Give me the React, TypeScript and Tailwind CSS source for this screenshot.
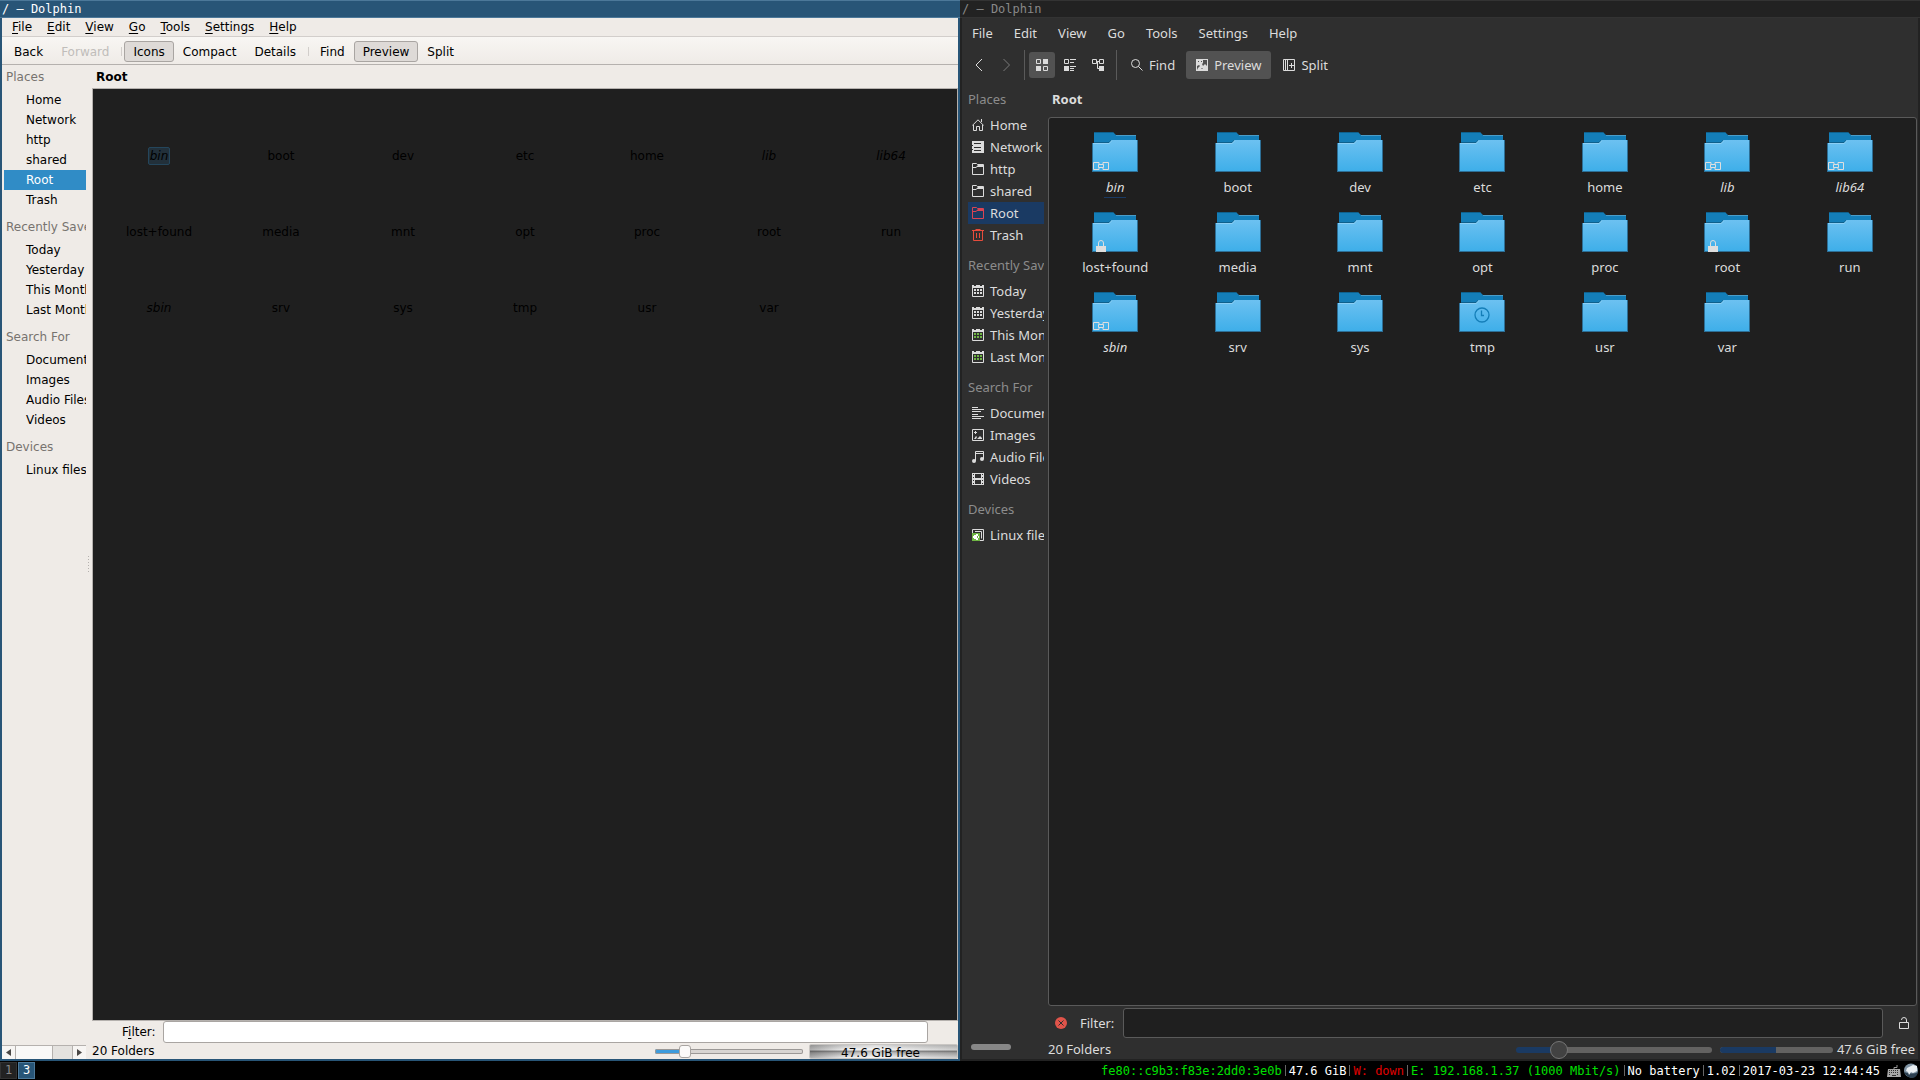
import type { ReactNode } from "react"
import clsx from "clsx"

const MENU = ["File", "Edit", "View", "Go", "Tools", "Settings", "Help"]

type Place = { name: string; icon: ReactNode }
type Folder = { name: string; link?: boolean; locked?: boolean; temp?: boolean }

const FOLDERS: Folder[] = [
    { name: "bin", link: true },
    { name: "boot" },
    { name: "dev" },
    { name: "etc" },
    { name: "home" },
    { name: "lib", link: true },
    { name: "lib64", link: true },
    { name: "lost+found", locked: true },
    { name: "media" },
    { name: "mnt" },
    { name: "opt" },
    { name: "proc" },
    { name: "root", locked: true },
    { name: "run" },
    { name: "sbin", link: true },
    { name: "srv" },
    { name: "sys" },
    { name: "tmp", temp: true },
    { name: "usr" },
    { name: "var" },
]

function Glyph({ children, className }: { children: ReactNode; className?: string }) {
    return (
        <svg viewBox="0 0 12 12" className={clsx("size-3 shrink-0", className)} fill="none" stroke="currentColor" aria-hidden="true">
            {children}
        </svg>
    )
}

const homeIcon = (
    <Glyph>
        <path d="M0.3 6.5 L6 0.8 L11.7 6.5 M9.5 0v3 M1.5 6v5.5h3v-4h3v4h3V6" />
    </Glyph>
)

const networkIcon = (
    <Glyph>
        <path stroke="none" fill="currentColor" d="M0 0h12v12H0z" />
        <path stroke="#2f2f2f" d="M2 2.5h7M0 4.500h1M2 6.5h7M0 8.500h1M2 9.5h7" />
    </Glyph>
)

const folderIcon = (
    <Glyph>
        <path d="M0.5 0.5h4l1 1h6v10H0.5z" />
        <path stroke="none" fill="currentColor" d="M1 4h3l2-2h5v2H5L4 5H1z" />
    </Glyph>
)

const rootIcon = <Glyph className="text-[#da4453]">{folderIcon.props.children}</Glyph>

const trashIcon = (
    <Glyph className="text-[#e74c3c]">
        <path d="M0 1.5h12M3.5 0.5h5M1.5 1.5v10h9v-10M4.5 4v5M7.5 4v5" />
    </Glyph>
)

function CalendarIcon({ green }: { green?: boolean }) {
    return (
        <Glyph>
            <path d="M0.5 1.5h11v10H0.5z" />
            <path stroke="none" fill="currentColor" d="M0 0h2v1h2V0h4v1h2V0h2v3H0z" />
            <path
                stroke="none"
                fill={green ? "#6fb544" : "currentColor"}
                d="M2 4h2v2H2zM5 4h2v2H5zM8 4h2v2H8zM2 7h2v2H2zM5 7h2v2H5zM8 7h2v2H8z"
            />
        </Glyph>
    )
}

const documentIcon = (
    <Glyph>
        <path d="M0 0.5h6M0 2.5h12M0 4.5h9M0 7.5h6M0 9.5h12M0 11.5h9" />
    </Glyph>
)

const imageIcon = (
    <Glyph>
        <path d="M0.5 0.5h11v11H0.5z" />
        <path stroke="none" fill="currentColor" d="M3 2h1v1h1v1H4v1H3V4H2V3h1zM2 10l2-3 1 1-1 2zM5 10l3-3 2 2v1z" />
    </Glyph>
)

const audioIcon = (
    <Glyph>
        <path d="M3.5 10V0.5h8V8M3.5 2.5h8" />
        <circle cx="2" cy="10" r="2" fill="currentColor" stroke="none" />
        <circle cx="10" cy="8" r="2" fill="currentColor" stroke="none" />
    </Glyph>
)

const videoIcon = (
    <Glyph>
        <path stroke="none" fill="currentColor" fillRule="evenodd" d="M0 0h12v12H0zM3 1h6v4H3zM3 7h6v4H3z" />
        <path stroke="#2f2f2f" strokeDasharray="1 2" d="M1.5 1v10M10.5 1v10" />
    </Glyph>
)

const diskIcon = (
    <Glyph>
        <path d="M0.5 0.5h11v11H0.5zM3 2.5h6.5v7M5 4.5h2.5V9" />
        <path stroke="none" fill="#6fb544" d="M0 4h8v8H0z" />
        <path stroke="none" fill="#fff" d="M1 7h1V6h2V5h2v2h1v2H6v2H4v-1H2V9H1z" />
        <path stroke="none" fill="#6fb544" d="M5 7h1v2H5z" />
    </Glyph>
)

const PLACES: { title: string; items: Place[] }[] = [
    {
        title: "Places",
        items: [
            { name: "Home", icon: homeIcon },
            { name: "Network", icon: networkIcon },
            { name: "http", icon: folderIcon },
            { name: "shared", icon: folderIcon },
            { name: "Root", icon: rootIcon },
            { name: "Trash", icon: trashIcon },
        ],
    },
    {
        title: "Recently Saved",
        items: [
            { name: "Today", icon: <CalendarIcon /> },
            { name: "Yesterday", icon: <CalendarIcon /> },
            { name: "This Month", icon: <CalendarIcon green /> },
            { name: "Last Month", icon: <CalendarIcon green /> },
        ],
    },
    {
        title: "Search For",
        items: [
            { name: "Documents", icon: documentIcon },
            { name: "Images", icon: imageIcon },
            { name: "Audio Files", icon: audioIcon },
            { name: "Videos", icon: videoIcon },
        ],
    },
    {
        title: "Devices",
        items: [{ name: "Linux filesystem", icon: diskIcon }],
    },
]

/* ---------- light window ---------- */

function LightButton({ children, active, disabled }: { children: ReactNode; active?: boolean; disabled?: boolean }) {
    return (
        <button
            disabled={disabled}
            className={clsx(
                "h-[21px] rounded-[3px] border px-2 leading-5",
                active ? "border-[#a9a5a2] bg-[#dedad7]" : "border-transparent",
                disabled && "text-[#c0bdba]"
            )}
        >
            {children}
        </button>
    )
}

function LightPlaces() {
    return (
        <aside className="flex w-[90px] shrink-0 flex-col">
            <nav className="ml-[2px] w-[82px] flex-1 overflow-hidden whitespace-nowrap">
                {PLACES.map((group, i) => (
                    <section key={group.title}>
                        <h2 className={clsx("pl-[2px] text-[#77736f]", i === 0 ? "h-[25px] leading-6" : "h-[30px] leading-[34px]")}>
                            {group.title}
                        </h2>
                        {group.items.map((place) => (
                            <button
                                key={place.name}
                                className={clsx(
                                    "block h-5 w-full overflow-hidden pl-[22px] text-left leading-5",
                                    place.name === "Root" && "bg-[#308cc6] text-white"
                                )}
                            >
                                {place.name}
                            </button>
                        ))}
                    </section>
                ))}
            </nav>
            <div className="flex h-[14px] w-[84px] border-t border-[#b5b1ae] bg-[#e4e2df]">
                <button aria-label="Scroll left" className="flex w-[14px] items-center justify-center border-r border-[#b5b1ae] bg-[#f7f5f3]">
                    <svg viewBox="0 0 5 7" className="h-[7px] w-[5px]" fill="#4a4745"><path d="M5 0v7L0 3.5z" /></svg>
                </button>
                <div className="w-[37px] border-r border-[#b5b1ae] bg-[#f9f8f7]" />
                <div className="flex-1" />
                <button aria-label="Scroll right" className="flex w-[14px] items-center justify-center border-l border-[#b5b1ae] bg-[#f7f5f3]">
                    <svg viewBox="0 0 5 7" className="h-[7px] w-[5px]" fill="#4a4745"><path d="M0 0v7l5-3.5z" /></svg>
                </button>
            </div>
        </aside>
    )
}

function LightWindow() {
    return (
        <section className="flex min-w-0 flex-col bg-[#285577] font-['DejaVu_Sans',sans-serif] text-[12px] text-black">
            <header className="h-[18px] border-y border-[#4c7899] px-[2px] font-['DejaVu_Sans_Mono',monospace] leading-4 text-white">
                / — Dolphin
            </header>
            <div className="mx-[2px] mb-[2px] flex min-h-0 flex-1 flex-col bg-[#efebe7]">
                <nav className="flex h-[19px] gap-px border-b border-[#d2cecb] pl-[3px]">
                    {MENU.map((item) => (
                        <button key={item} className="px-[7px] leading-[18px]">
                            <span className="underline underline-offset-2">{item[0]}</span>
                            {item.slice(1)}
                        </button>
                    ))}
                </nav>
                <div className="flex h-7 items-center border-b border-[#b5b1ae] bg-linear-to-b from-[#f8f6f3] to-[#efebe7] pt-[2px] pl-[3px]">
                    <LightButton>Back</LightButton>
                    <LightButton disabled>Forward</LightButton>
                    <div className="mr-[2px] ml-[3px] h-[9px] w-px bg-[#d2cecb]" />
                    <LightButton active>Icons</LightButton>
                    <LightButton>Compact</LightButton>
                    <LightButton>Details</LightButton>
                    <div className="mr-[2px] ml-[3px] h-[9px] w-px bg-[#d2cecb]" />
                    <LightButton>Find</LightButton>
                    <LightButton active>Preview</LightButton>
                    <LightButton>Split</LightButton>
                </div>
                <div className="flex min-h-0 flex-1">
                    <LightPlaces />
                    <main className="relative flex min-w-0 flex-1 flex-col">
                        {/* splitter grip */}
                        <div className="absolute top-[491px] -left-1 flex flex-col gap-[2px]">
                            {[0, 1, 2, 3, 4, 5].map((dot) => (
                                <span key={dot} className="size-px bg-[#b5b1ae]" />
                            ))}
                        </div>
                        <h1 className="h-[23px] pl-1 font-bold leading-6">Root</h1>
                        <ul className="grid flex-1 auto-rows-[76px] grid-cols-7 content-start border border-[#b5b1ae] bg-[#1f1f1f] px-[5px] pt-[29px]">
                            {FOLDERS.map((folder, i) => (
                                <li key={folder.name} className="flex items-center justify-center">
                                    <span
                                        className={clsx(
                                            "rounded-[2px] border px-px leading-4",
                                            folder.link && "italic",
                                            i === 0 ? "border-[#24465c] bg-[#22303a]" : "border-transparent"
                                        )}
                                    >
                                        {folder.name}
                                    </span>
                                </li>
                            ))}
                        </ul>
                        <div className="flex h-[22px] items-center px-[30px]">
                            <label htmlFor="light-filter" className="w-[41px] leading-[22px]">
                                F<span className="underline underline-offset-2">i</span>lter:
                            </label>
                            <input
                                id="light-filter"
                                className="h-[22px] min-w-0 flex-1 rounded-[3px] border border-[#a9a5a2] bg-white px-1 outline-none"
                            />
                        </div>
                        <footer className="flex h-4 items-center">
                            <span className="flex-1">20 Folders</span>
                            <input
                                type="range"
                                aria-label="Icon size"
                                defaultValue={18}
                                className="h-[14px] w-[148px] appearance-none bg-transparent [&::-webkit-slider-runnable-track]:h-[5px] [&::-webkit-slider-runnable-track]:rounded-[2px] [&::-webkit-slider-runnable-track]:bg-[linear-gradient(to_right,#3d9bdc_20%,#d8d5d2_20%)] [&::-webkit-slider-runnable-track]:shadow-[inset_0_0_0_1px_#9b9896] [&::-webkit-slider-thumb]:-mt-1 [&::-webkit-slider-thumb]:h-[13px] [&::-webkit-slider-thumb]:w-3 [&::-webkit-slider-thumb]:appearance-none [&::-webkit-slider-thumb]:rounded-[3px] [&::-webkit-slider-thumb]:border [&::-webkit-slider-thumb]:border-[#a9a5a2] [&::-webkit-slider-thumb]:bg-[#fbfaf9]"
                            />
                            <div className="ml-[6px] h-[15px] w-[149px] overflow-hidden rounded-[2px] border border-[#c9c6c3] bg-[linear-gradient(to_right,#0004,#0000_25%,#fff6_45%,#0000_60%,#0002),linear-gradient(to_bottom,#c6c6c6,#ececec_35%,#8c8c8c_50%,#b4b4b4_60%,#f0f0f0)] pr-[6px] text-center leading-4">
                                47.6 GiB free
                            </div>
                        </footer>
                    </main>
                </div>
            </div>
        </section>
    )
}

/* ---------- dark window ---------- */

function FolderPicture({ folder }: { folder: Folder }) {
    return (
        <svg viewBox="0 0 48 48" className="size-12" aria-hidden="true">
            <defs>
                <linearGradient id="folder-front" x1="0" y1="0" x2="0" y2="1">
                    <stop offset="0" stopColor="#6cc1f1" />
                    <stop offset="1" stopColor="#3daee9" />
                </linearGradient>
            </defs>
            <path fill="#147eb8" d="M3 4h19l3 3h20v10H3z" />
            <path fill="#0f608c" d="M3 4h19v1H3zM3 14h15l2-2v2l-2 2H3z" />
            <path fill="#4a9cc8" d="M25 7h20v1H25z" />
            <path fill="url(#folder-front)" d="M1 15h17l3-3h26v32H1z" />
            <path fill="#8ccff5" d="M1 15h17l3-3v1l-3 3H1z" />
            <path fill="#2d6f96" d="M1 15h1v29H1zM46 12h1v32h-1zM1 43h46v1H1z" />
            {folder.link && (
                <g fill="none" stroke="#dedede">
                    <path d="M8 34.5H2.5v7H8v-2M8 34.5v2M12 36.5v-2h5.5v7H12v-2" />
                    <path d="M7.5 36.5h5v3h-5z" />
                </g>
            )}
            {folder.locked && (
                <g>
                    <path fill="none" stroke="#dedede" d="M7.5 38v-3q0-2.500 2.500-2.500t2.500 2.500v3" />
                    <path fill="#dedede" d="M5 38h10v6H5z" />
                </g>
            )}
            {folder.temp && (
                <g fill="none" stroke="#147eb8" strokeWidth="1.300">
                    <circle cx="24" cy="27" r="7" />
                    <path d="M23.500 22.500v5h2.500" />
                </g>
            )}
        </svg>
    )
}

function DarkPlaces() {
    return (
        <aside className="flex w-[86px] shrink-0 flex-col">
            <nav className="ml-[6px] w-[76px] flex-1 overflow-hidden whitespace-nowrap">
                {PLACES.map((group) => (
                    <section key={group.title}>
                        <h2 className="h-[34px] leading-[38px] text-[#8c8c8c]">{group.title}</h2>
                        {group.items.map((place) => (
                            <button
                                key={place.name}
                                className={clsx(
                                    "flex h-[22px] w-full items-center gap-[6px] overflow-hidden pl-1",
                                    place.name === "Root" && "bg-[#1a3a63]"
                                )}
                            >
                                {place.icon}
                                <span className="leading-6">{place.name}</span>
                            </button>
                        ))}
                    </section>
                ))}
            </nav>
            <div className="mb-[9px] ml-[9px] h-[6px] w-10 rounded-full bg-[#878787]" />
        </aside>
    )
}

function DarkToolbar() {
    return (
        <div className="flex h-8 items-center pt-[2px]">
            <button aria-label="Back" className="flex h-[26px] w-7 items-center justify-center pl-[6px]">
                <svg viewBox="0 0 8 14" className="h-[14px] w-2" fill="none" stroke="currentColor"><path d="M7 1L1 7l6 6" /></svg>
            </button>
            <button aria-label="Forward" disabled className="flex h-[26px] w-[34px] items-center justify-center text-[#7a7a7a]">
                <svg viewBox="0 0 8 14" className="h-[14px] w-2" fill="none" stroke="currentColor"><path d="M.5 1l6 6-6 6" /></svg>
            </button>
            <div className="mr-1 h-[30px] w-px bg-[#5a5a5a]" />
            <button aria-label="Icons" className="flex size-[26px] items-center justify-center rounded-[3px] bg-[#525252]">
                <Glyph>
                    <path d="M.5.5h4v4h-4zM7.500 7.500h4v4h-4z" />
                    <path stroke="none" fill="currentColor" d="M7 0h5v5H7zM0 7h5v5H0z" />
                </Glyph>
            </button>
            <button aria-label="Compact" className="ml-[2px] flex size-[26px] items-center justify-center">
                <Glyph>
                    <path d="M.5.5h4v4h-4zM6 .5h6M6 3.500h4M6 7.500h6M6 9.500h4M6 11.500h4" />
                    <path stroke="none" fill="currentColor" d="M0 7h5v5H0z" />
                </Glyph>
            </button>
            <button aria-label="Details" className="ml-[2px] flex size-[26px] items-center justify-center">
                <Glyph>
                    <path d="M.5.5h4v4h-4zM7.500.5h4v4h-4zM4.500 2.500h3M5.500 2.500v7H7" />
                    <path stroke="none" fill="currentColor" d="M7 7h5v5H7z" />
                </Glyph>
            </button>
            <div className="ml-[5px] h-[30px] w-px bg-[#5a5a5a]" />
            <button className="ml-1 flex h-7 items-center gap-[6px] px-[10px]">
                <Glyph>
                    <circle cx="4.500" cy="4.500" r="4" />
                    <path d="M7.500 7.500l4 4" />
                </Glyph>
                <span className="leading-6">Find</span>
            </button>
            <button className="ml-px flex h-7 items-center gap-[6px] rounded-[3px] bg-[#525252] px-[10px]">
                {/* photo with the sun and the two hills cut out */}
                <Glyph>
                    <path stroke="none" fill="currentColor" d="M0 0h12v12H0z" />
                    <path stroke="none" fill="#525252" d="M7 1h4v6L9 5 7 7 6 5l1-1zM2 2h1v1H2zM5 2h1v1H5zM1 7l2-1 1 1-2 2-1 2zM5 10l1-1 1 1z" />
                </Glyph>
                <span className="leading-6">Preview</span>
            </button>
            <button className="ml-[2px] flex h-7 items-center gap-[6px] px-[10px]">
                <Glyph>
                    <path d="M.5.5h11v11H.5zM2.500 1v10M4.500 1v10M6 6.500h5M8.500 4v5" />
                </Glyph>
                <span className="leading-6">Split</span>
            </button>
        </div>
    )
}

function DarkWindow() {
    return (
        <section className="flex min-w-0 flex-col bg-[#222] font-['Noto_Sans',sans-serif] text-[13px] text-[#dcdcdc]">
            <header className="h-[18px] border-y border-[#333] px-[2px] font-['DejaVu_Sans_Mono',monospace] text-[12px] leading-4 text-[#888]">
                / — Dolphin
            </header>
            <div className="mx-[2px] mb-[2px] flex min-h-0 flex-1 flex-col bg-[#2f2f2f]">
                <nav className="flex h-[30px] items-center gap-px">
                    {MENU.map((item) => (
                        <button key={item} className="h-5 px-[10px] leading-5">{item}</button>
                    ))}
                </nav>
                <DarkToolbar />
                <div className="flex min-h-0 flex-1">
                    <DarkPlaces />
                    <main className="flex min-w-0 flex-1 flex-col">
                        <h1 className="h-[37px] pl-1 font-bold leading-[38px]">Root</h1>
                        <ul className="mr-px grid flex-1 auto-rows-[80px] grid-cols-7 content-start rounded-[3px] border border-[#5a5a5a] bg-[#1f1f1f] px-[5px] pt-[10px]">
                            {FOLDERS.map((folder, i) => (
                                <li key={folder.name} className="flex flex-col items-center">
                                    <FolderPicture folder={folder} />
                                    <span
                                        className={clsx(
                                            "border-b px-[2px] pt-[2px] leading-[19px]",
                                            folder.link && "italic",
                                            i === 0 ? "border-[#1a3a63]" : "border-transparent"
                                        )}
                                    >
                                        {folder.name}
                                    </span>
                                </li>
                            ))}
                        </ul>
                        <div className="flex h-[34px] items-center pl-[7px]">
                            <button aria-label="Hide filter bar" className="mr-[13px]">
                                <Glyph>
                                    <circle cx="6" cy="6" r="6" fill="#e0544a" stroke="none" />
                                    <path stroke="#2f2f2f" d="M3.500 3.500l5 5M8.500 3.500l-5 5" />
                                </Glyph>
                            </button>
                            <label htmlFor="dark-filter" className="w-[43px] pt-px">Filter:</label>
                            <input
                                id="dark-filter"
                                className="h-[30px] min-w-0 flex-1 rounded-[3px] border border-[#5a5a5a] bg-[#1f1f1f] px-2 outline-none"
                            />
                            <button aria-label="Keep filter when changing folders" className="flex w-[35px] justify-center pl-[6px]">
                                <Glyph>
                                    <path d="M1.500 5.500h9v6h-9zM8.500 5.500V3q0-2.500-2.500-2.500T3.500 3" />
                                </Glyph>
                            </button>
                        </div>
                        <footer className="flex h-[19px] items-center pr-[3px]">
                            <span className="flex-1">20 Folders</span>
                            <input
                                type="range"
                                aria-label="Icon size"
                                defaultValue={19}
                                className="h-[18px] w-[196px] appearance-none bg-transparent [&::-webkit-slider-runnable-track]:h-[6px] [&::-webkit-slider-runnable-track]:rounded-full [&::-webkit-slider-runnable-track]:bg-[linear-gradient(to_right,#1a3a63_20%,#636261_20%)] [&::-webkit-slider-thumb]:-mt-[6px] [&::-webkit-slider-thumb]:size-[18px] [&::-webkit-slider-thumb]:appearance-none [&::-webkit-slider-thumb]:rounded-full [&::-webkit-slider-thumb]:border [&::-webkit-slider-thumb]:border-[#757575] [&::-webkit-slider-thumb]:bg-[#424242]"
                            />
                            <div className="mr-1 ml-2 h-[6px] w-[113px] overflow-hidden rounded-full bg-[#636261]">
                                <div className="h-full w-1/2 bg-[#1a3a63]" />
                            </div>
                            <span>47.6 GiB free</span>
                        </footer>
                    </main>
                </div>
            </div>
        </section>
    )
}

/* ---------- i3 bar ---------- */

const STATUS = [
    { text: "fe80::c9b3:f83e:2dd0:3e0b", color: "text-[#00e000]" },
    { text: "47.6 GiB", color: "text-white" },
    { text: "W: down", color: "text-[#e00000]" },
    { text: "E: 192.168.1.37 (1000 Mbit/s)", color: "text-[#00e000]" },
    { text: "No battery", color: "text-white" },
    { text: "1.02", color: "text-white" },
    { text: "2017-03-23 12:44:45", color: "text-white" },
]

function StatusBar() {
    return (
        <footer className="flex h-[19px] items-center bg-black font-['DejaVu_Sans_Mono',monospace] text-[12px] whitespace-pre">
            <button className="h-[17px] w-[17px] border border-[#333] bg-[#222] leading-[15px] text-[#888]">1</button>
            <button className="ml-px h-[17px] w-[17px] border border-[#4c7899] bg-[#285577] leading-[15px] text-white">3</button>
            <div className="ml-auto flex items-center">
                {STATUS.map((block, i) => (
                    <div key={block.text} className="flex items-center">
                        {i > 0 && <span className="mx-[3px] h-[11px] w-px bg-[#666]" />}
                        <span className={block.color}>{block.text}</span>
                    </div>
                ))}
            </div>
            <svg viewBox="0 0 14 14" className="ml-[7px] size-[14px]" aria-hidden="true">
                <path fill="none" stroke="#999" d="M7 5V3.500h3V1" />
                <path fill="#a8a8a8" d="M1 5h12l1 8H0z" />
                <path stroke="#333" strokeDasharray="1 1" d="M2 6.500h10M2 8.500h10M2 10.500h2M10 10.500h2" />
                <path stroke="#333" d="M5 11.500h4" />
            </svg>
            <svg viewBox="0 0 16 16" className="mr-px ml-[2px] size-4" aria-hidden="true">
                <circle cx="8" cy="7.500" r="7" fill="#7f93a3" />
                <path fill="#2b3f50" d="M1 9q3 6 9 6 4-1 5-6-5 3-14 0z" />
                <path fill="#e9eef2" d="M4 5l6-3 4 1v5l-4 2-2-1-2 3-1-3-2-1z" />
            </svg>
        </footer>
    )
}

export default function App() {
    return (
        <div className="flex h-screen flex-col overflow-hidden bg-black">
            <div className="grid min-h-0 flex-1 grid-cols-2">
                <LightWindow />
                <DarkWindow />
            </div>
            <StatusBar />
        </div>
    )
}
